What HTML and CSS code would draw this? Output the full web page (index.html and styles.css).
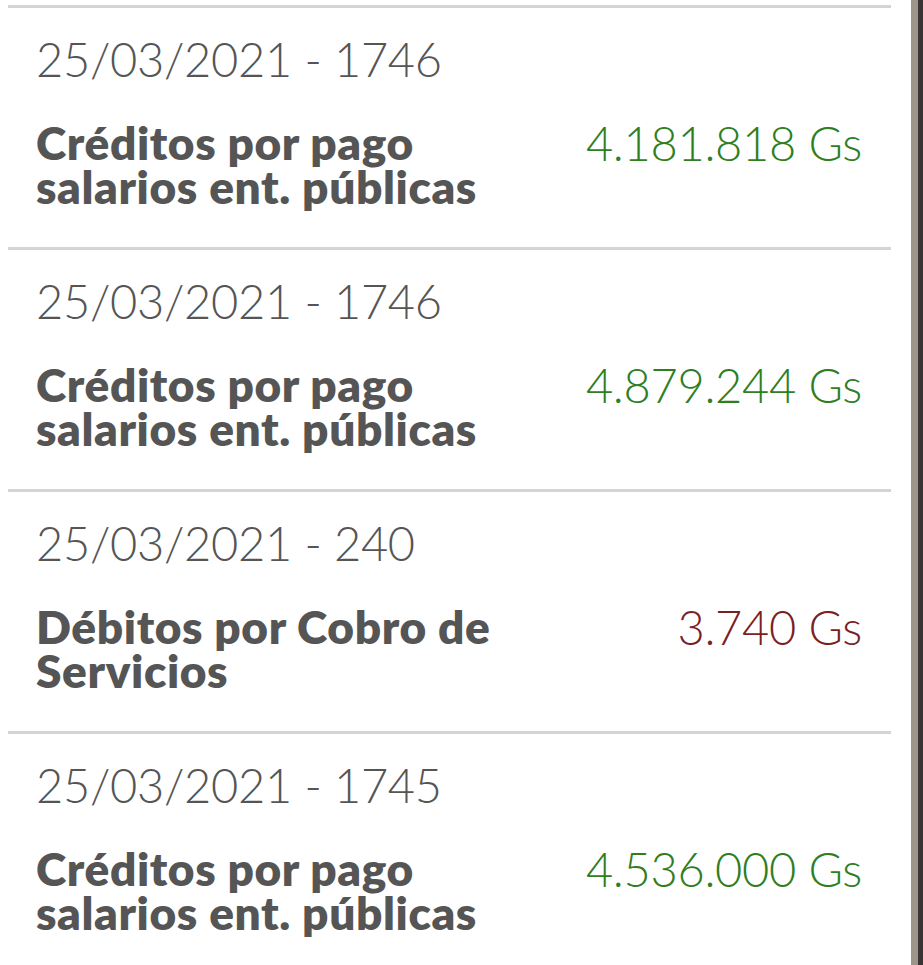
FILE: index.html
```html
<!DOCTYPE html>
<html lang="es">
<head>
<meta charset="utf-8">
<title>Movimientos</title>
<link rel="stylesheet" href="styles.css">
</head>
<body>
<div class="screen">
  <main class="list">
    <section class="item">
      <div class="date">25/03/2021 - 1746</div>
      <div class="row">
        <div class="title">Créditos por pago salarios ent. públicas</div>
        <div class="amount credit">4.181.818 Gs</div>
      </div>
    </section>
    <section class="item">
      <div class="date">25/03/2021 - 1746</div>
      <div class="row">
        <div class="title">Créditos por pago salarios ent. públicas</div>
        <div class="amount credit">4.879.244 Gs</div>
      </div>
    </section>
    <section class="item">
      <div class="date">25/03/2021 - 240</div>
      <div class="row">
        <div class="title">Débitos por Cobro de Servicios</div>
        <div class="amount debit">3.740 Gs</div>
      </div>
    </section>
    <section class="item">
      <div class="date">25/03/2021 - 1745</div>
      <div class="row">
        <div class="title">Créditos por pago salarios ent. públicas</div>
        <div class="amount credit">4.536.000 Gs</div>
      </div>
    </section>
  </main>
  <aside class="edge">
    <div class="edge-light"></div>
    <div class="edge-dark"></div>
  </aside>
</div>
</body>
</html>
```
FILE: styles.css
```css
html, body {
  margin: 0;
  padding: 0;
  background: #ffffff;
  height: 100%;
  overflow: hidden;
}

.screen {
  display: flex;
  height: 965px;
}

.list {
  width: 883px;
  margin-left: 8px;
  padding-top: 5px;
}

.item {
  box-sizing: border-box;
  height: 242px;
  border-top: 3px solid #d4d4d4;
  padding: 28px 29px 0 28px;
}

.date {
  font-family: "Lato", sans-serif;
  font-weight: 300;
  font-size: 47px;
  line-height: 46px;
  color: #555555;
  letter-spacing: -0.3px;
}

.row {
  display: flex;
  justify-content: space-between;
  align-items: flex-start;
  margin-top: 39px;
}

.title {
  max-width: 500px;
  font-family: "Lato", sans-serif;
  font-weight: 800;
  font-size: 46px;
  line-height: 44px;
  color: #555555;
  letter-spacing: 0.6px;
}

.amount {
  margin-top: -1px;
  font-family: "Lato", sans-serif;
  font-weight: 300;
  font-size: 47px;
  line-height: 46px;
  white-space: nowrap;
  letter-spacing: -0.3px;
}

.credit { color: #2f7e22; }
.debit { color: #7c1f1f; }

.edge {
  margin-left: 20px;
  display: flex;
  flex: 1;
}

.edge-light {
  width: 7px;
  background: #9d958a;
}

.edge-dark {
  flex: 1;
  background: #3a3532;
}
```
